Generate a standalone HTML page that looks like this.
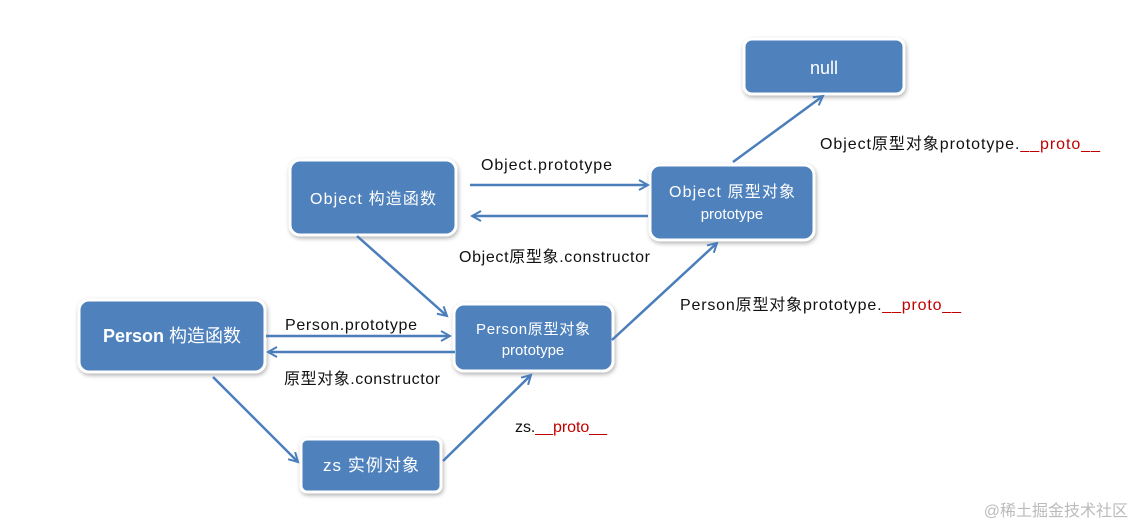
<!DOCTYPE html>
<html><head><meta charset="utf-8"><style>
body{margin:0;background:#fff;width:1134px;height:525px;overflow:hidden}
svg text{font-family:"Liberation Sans","Noto Sans CJK SC",sans-serif}
</style></head><body>
<svg width="1134" height="525" viewBox="0 0 1134 525" xmlns="http://www.w3.org/2000/svg">
<defs>
<filter id="sh" x="-20%" y="-20%" width="140%" height="150%"><feDropShadow dx="1" dy="2" stdDeviation="2" flood-color="#000" flood-opacity="0.3"/></filter>
<marker id="ar" markerWidth="12" markerHeight="12" refX="10" refY="6" orient="auto" markerUnits="userSpaceOnUse"><path d="M1,1 L10,6 L1,11" fill="none" stroke="#4a7ebb" stroke-width="2"/></marker>
</defs>
<g fill="#4f81bd" stroke="#fff" stroke-width="3" filter="url(#sh)">
<rect x="744" y="39" width="160" height="55" rx="8"/>
<rect x="650" y="165" width="164" height="75" rx="10"/>
<rect x="290" y="160" width="166" height="75" rx="10"/>
<rect x="454" y="304" width="159" height="67" rx="10"/>
<rect x="79" y="300" width="186" height="72" rx="10"/>
<rect x="301" y="439" width="140" height="53" rx="6"/>
</g>
<g stroke="#4a7ebb" stroke-width="2.5" fill="none" marker-end="url(#ar)">
<line x1="470" y1="185" x2="648" y2="185"/>
<line x1="648" y1="216" x2="472" y2="216"/>
<line x1="733" y1="162" x2="823" y2="96"/>
<line x1="612" y1="340" x2="717" y2="243"/>
<line x1="357" y1="236" x2="447" y2="316"/>
<line x1="266" y1="336" x2="450" y2="336"/>
<line x1="455" y1="352" x2="268" y2="352"/>
<line x1="213" y1="377" x2="298" y2="462"/>
<line x1="443" y1="461" x2="531" y2="375"/>
</g>
<g fill="#fff" text-anchor="middle">
<text x="824" y="74" font-size="18">null</text>
<text x="732" y="197" font-size="16" textLength="126">Object 原型对象</text>
<text x="732" y="219" font-size="15">prototype</text>
<text x="373" y="204" font-size="16" textLength="126">Object 构造函数</text>
<text x="533" y="334" font-size="15" textLength="114">Person原型对象</text>
<text x="533" y="355" font-size="15">prototype</text>
<text x="172" y="342" font-size="18" font-weight="bold">Person <tspan font-weight="normal">构造函数</tspan></text>
<text x="371" y="471" font-size="17" textLength="96">zs 实例对象</text>
</g>
<g fill="#111" font-size="16">
<text x="481" y="170" textLength="131">Object.prototype</text>
<text x="459" y="262" textLength="191">Object原型象.constructor</text>
<text x="820" y="149" textLength="280">Object原型对象prototype.<tspan fill="#c00000">__proto__</tspan></text>
<text x="680" y="310" textLength="281">Person原型对象prototype.<tspan fill="#c00000">__proto__</tspan></text>
<text x="285" y="330" textLength="132">Person.prototype</text>
<text x="284" y="384" textLength="156">原型对象.constructor</text>
<text x="515" y="432" textLength="92">zs.<tspan fill="#c00000">__proto__</tspan></text>
</g>
<text x="1128" y="516" text-anchor="end" font-size="16" fill="#bbb">@稀土掘金技术社区</text>
</svg>
</body></html>
